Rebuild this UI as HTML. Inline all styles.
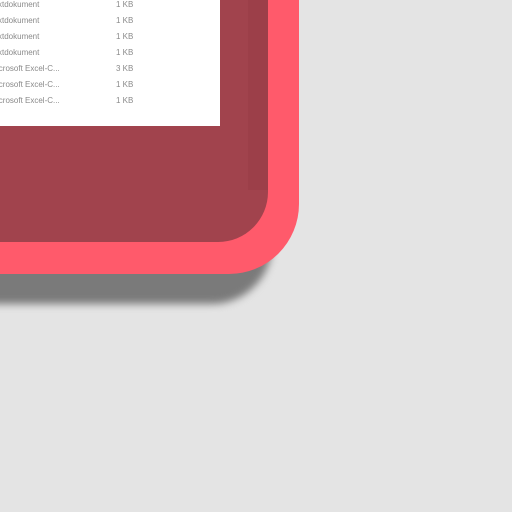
<!DOCTYPE html>
<html><head><style>
body{margin:0;width:512px;height:512px;background:#e4e4e4;overflow:hidden;position:relative;font-family:"Liberation Sans",sans-serif}
.sh{position:absolute;left:-100px;top:24px;width:372px;height:280px;background:#7a7a7a;border-radius:0 0 60px 60px;filter:blur(4px)}
.pink{position:absolute;left:-100px;top:-100px;width:399px;height:374px;background:#ff5a6b;border-radius:70px}
.dark{position:absolute;left:-100px;top:-100px;width:368px;height:342px;background:#a1434d;border-radius:50px;overflow:hidden}
.strip{position:absolute;left:348px;top:0;width:20px;height:290px;background:#9c3f49}
.white{position:absolute;left:0;top:0;width:220px;height:126px;background:#fff}
.r{position:absolute;font-size:8px;color:#8a8a8a;line-height:10px;white-space:nowrap;filter:blur(0.3px)}
</style></head><body>
<div class="sh"></div>
<div class="pink"></div>
<div class="dark"><div class="strip"></div></div>
<div class="white"></div>
<div class="r" style="left:-2px;top:0">xtdokument</div><div class="r" style="left:116px;top:0">1 KB</div>
<div class="r" style="left:-2px;top:16px">xtdokument</div><div class="r" style="left:116px;top:16px">1 KB</div>
<div class="r" style="left:-2px;top:32px">xtdokument</div><div class="r" style="left:116px;top:32px">1 KB</div>
<div class="r" style="left:-2px;top:48px">xtdokument</div><div class="r" style="left:116px;top:48px">1 KB</div>
<div class="r" style="left:-3px;top:64px">icrosoft Excel-C...</div><div class="r" style="left:116px;top:64px">3 KB</div>
<div class="r" style="left:-3px;top:80px">icrosoft Excel-C...</div><div class="r" style="left:116px;top:80px">1 KB</div>
<div class="r" style="left:-3px;top:96px">icrosoft Excel-C...</div><div class="r" style="left:116px;top:96px">1 KB</div>
</body></html>
